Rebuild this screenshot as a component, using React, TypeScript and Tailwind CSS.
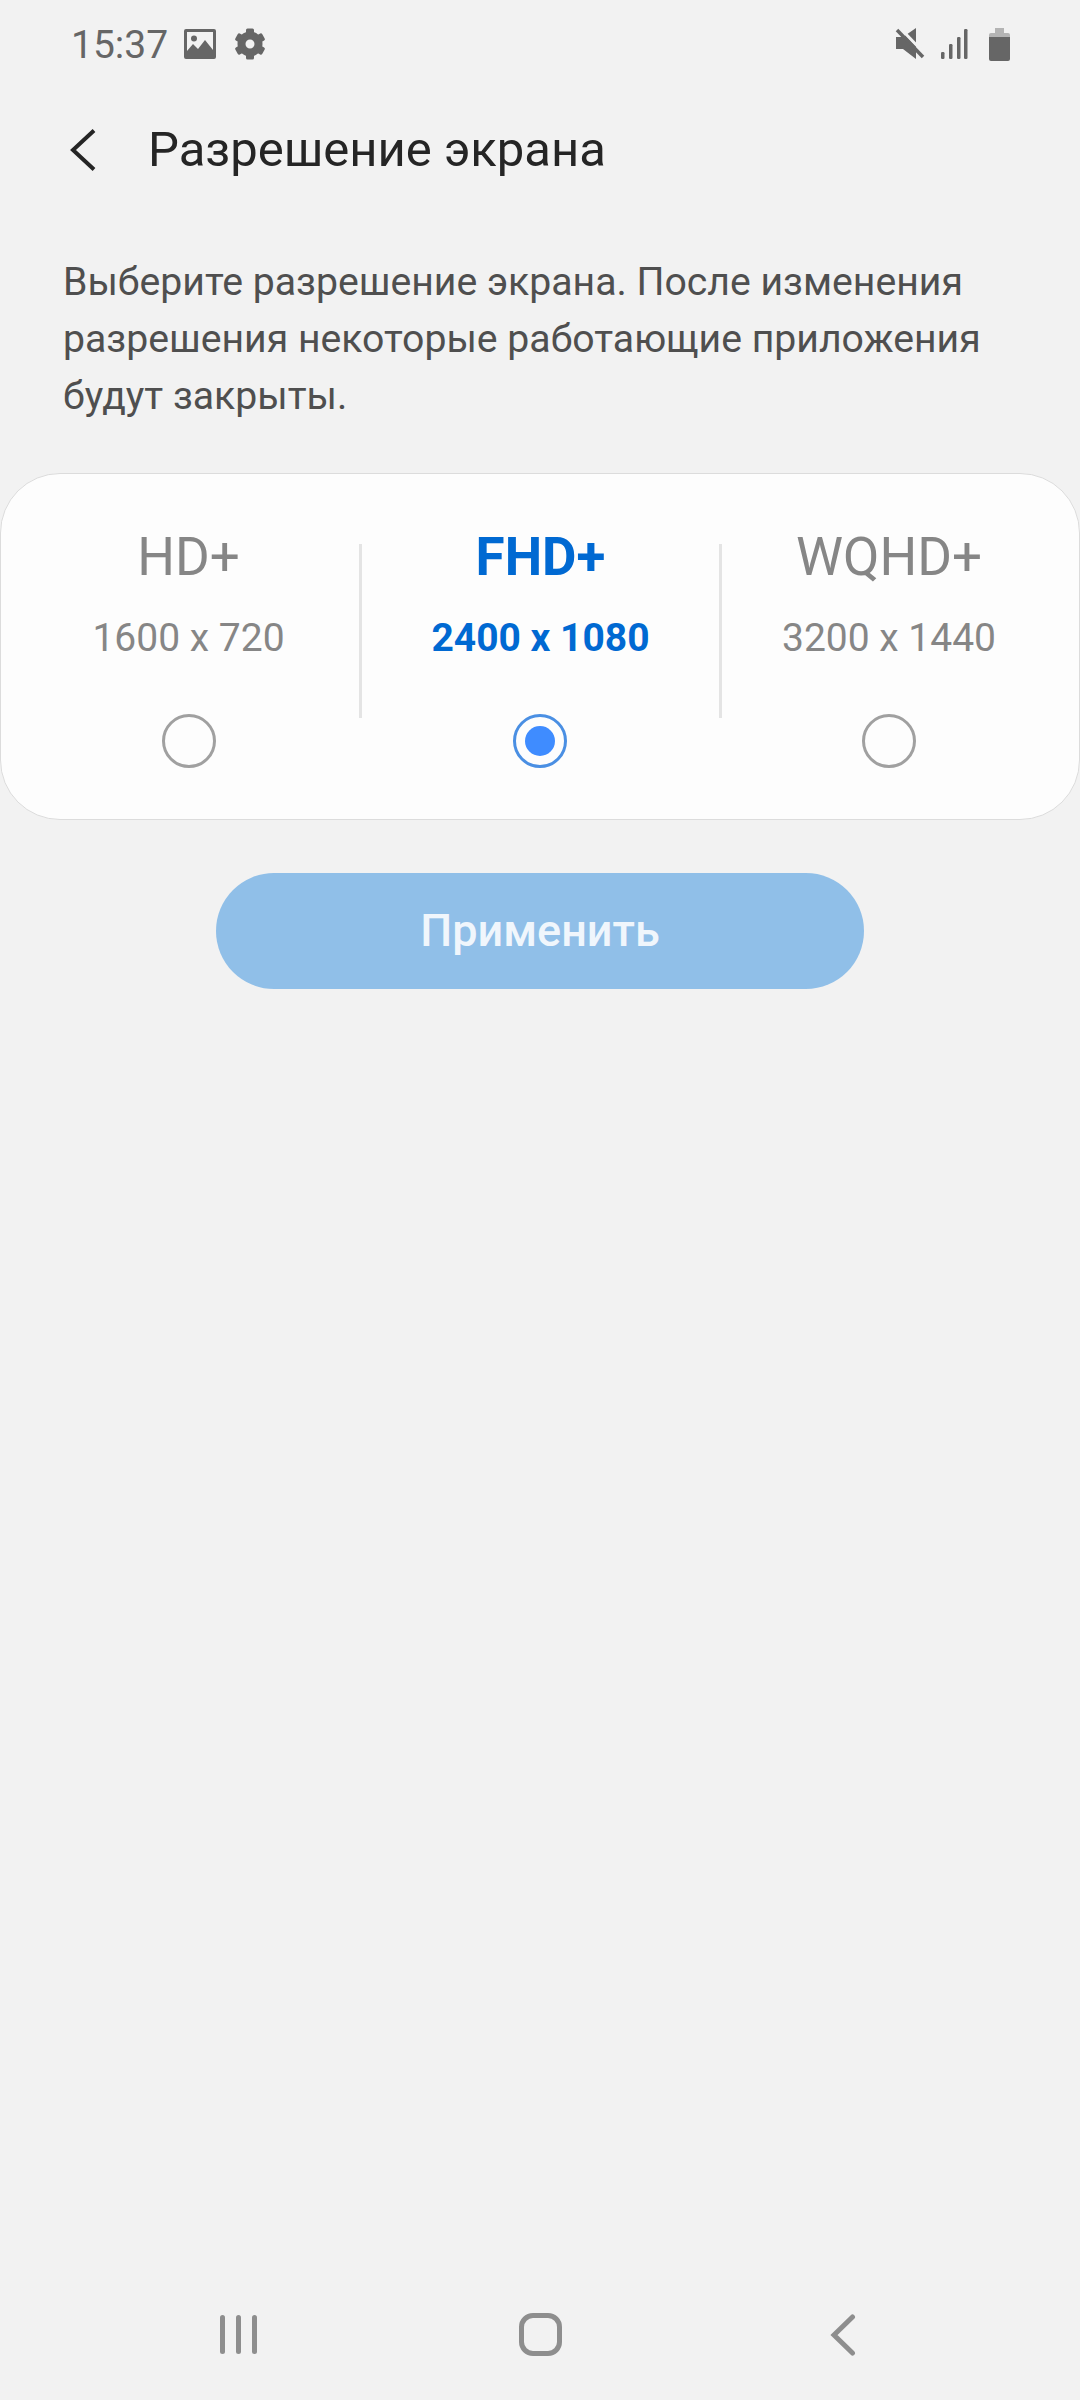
import React from 'react';

const resolutions = [
  { name: 'HD+', size: '1600 x 720', width: 'w-[341px]' },
  { name: 'FHD+', size: '2400 x 1080', width: 'w-[357px]', active: true },
  { name: 'WQHD+', size: '3200 x 1440', width: 'w-[334px]' },
];

const GEAR_TEETH = [0, 60, 120, 180, 240, 300];

const StatusBar = () => (
  <div className="flex items-center h-[34px] mt-[27px] pl-[71px] pr-[70px] text-[#666666]">
    <span className="text-[39px] leading-[34px] w-[113px] mt-[2px]">15:37</span>
    <svg width="32" height="30" viewBox="0 0 32 30" className="mr-[18px]">
      <path
        fillRule="evenodd"
        fill="#666666"
        d="M2 0h28a2 2 0 0 1 2 2v26a2 2 0 0 1-2 2H2a2 2 0 0 1-2-2V2a2 2 0 0 1 2-2zM3 3v19l6-7 5 5 7-9 8 10V3z"
      />
      <circle cx="10" cy="9.5" r="3" fill="#666666" />
    </svg>
    <svg width="32" height="32" viewBox="0 0 32 32">
      <circle cx="16" cy="16" r="8.5" fill="none" stroke="#666666" strokeWidth="8" />
      {GEAR_TEETH.map((deg) => (
        <rect key={deg} x="12" y="0.5" width="8" height="7" rx="1.5" fill="#666666" transform={`rotate(${deg} 16 16)`} />
      ))}
    </svg>
    <div className="ml-auto flex items-center">
      <svg width="30" height="32" viewBox="0 0 30 32" className="mr-[15px]">
        <path fill="#666666" d="M1 9h7L21 0v31L8 21H1z" />
        <path d="M5 0l26 27" stroke="#f2f2f2" strokeWidth="3" />
        <path d="M2 2l26 27" stroke="#666666" strokeWidth="3.5" />
      </svg>
      <svg width="28" height="32" viewBox="0 0 28 32" className="mr-[21px]">
        <rect x="1" y="24" width="3.5" height="7" rx="1.2" fill="#666666" />
        <rect x="9" y="16" width="3.5" height="15" rx="1.2" fill="#666666" />
        <rect x="17" y="9" width="3.5" height="22" rx="1.2" fill="#666666" />
        <rect x="24" y="1" width="3.5" height="30" rx="1.2" fill="#666666" />
      </svg>
      <svg width="21" height="33" viewBox="0 0 21 33">
        <path fill="#b4b4b4" d="M6 0h9v5h4a2 2 0 0 1 2 2v3H0V7a2 2 0 0 1 2-2h4z" />
        <path fill="#666666" d="M0 9h21v22a2 2 0 0 1-2 2H2a2 2 0 0 1-2-2z" />
      </svg>
    </div>
  </div>
);

const Radio = ({ active }: { active?: boolean }) => (
  <div
    className={`w-[54px] h-[54px] rounded-full border-[3px] flex items-center justify-center ${
      active ? 'border-[#4a8fe3] mr-[2px]' : 'border-[#a0a0a0]'
    }`}
  >
    {active && <div className="w-[30px] h-[30px] rounded-full bg-[#3f8cff]" />}
  </div>
);

const ResolutionCard = () => (
  <div className="mt-[48px] h-[347px] rounded-[60px] border border-[#dcdcdc] bg-[#fdfdfd] flex pl-[17px] pr-[17px]">
    {resolutions.map((r, i) => (
      <React.Fragment key={r.name}>
        {i > 0 && <div className="w-[3px] h-[174px] mt-[70px] shrink-0 bg-[#e4e4e4]" />}
        <div className={`${r.width} shrink-0 flex flex-col items-center pt-[51px]`}>
          <div
            className={`text-[53px] leading-[64px] ${
              r.active ? 'font-bold text-[#0069d2]' : 'text-[#868686]'
            }`}
          >
            {r.name}
          </div>
          <div
            className={`mt-[24px] text-[39px] leading-[50px] ${
              r.active ? 'font-bold text-[#0069d2]' : 'text-[#868686]'
            }`}
          >
            {r.size}
          </div>
          <div className="mt-[51px]">
            <Radio active={r.active} />
          </div>
        </div>
      </React.Fragment>
    ))}
  </div>
);

const NavBar = () => (
  <div className="mt-auto mb-[44px] h-[43px] flex items-center relative">
    <div className="ml-[220px] flex gap-[11px]">
      <div className="w-[5px] h-[39px] rounded-full bg-[#8e8e8e]" />
      <div className="w-[5px] h-[39px] rounded-full bg-[#8e8e8e]" />
      <div className="w-[5px] h-[39px] rounded-full bg-[#8e8e8e]" />
    </div>
    <div className="ml-[262px] w-[43px] h-[43px] rounded-[14px] border-[5px] border-[#8e8e8e]" />
    <svg width="26" height="42" viewBox="0 0 26 42" fill="none" className="ml-[268px]">
      <path d="M22.5 3L4 21l18.5 18" stroke="#8e8e8e" strokeWidth="5" strokeLinecap="round" strokeLinejoin="miter" />
    </svg>
  </div>
);

export default function App() {
  return (
    <div className="w-[1080px] h-[2400px] bg-[#f2f2f2] flex flex-col font-['Roboto',sans-serif]">
      <StatusBar />

      {/* header */}
      <div className="flex items-center h-[60px] mt-[59px] pl-[68px]">
        <svg width="30" height="44" viewBox="0 0 30 44" fill="none">
          <path d="M26 2.5L5 22l21 19.5" stroke="#252525" strokeWidth="4" />
        </svg>
        <h1 className="ml-[50px] text-[49px] leading-[60px] text-[#252525]">Разрешение экрана</h1>
      </div>

      <p className="mt-[74px] px-[63px] text-[39.2px] leading-[57px] text-[#4f4f4f]">
        Выберите разрешение экрана. После изменения
        <br />
        разрешения некоторые работающие приложения
        <br />
        будут закрыты.
      </p>

      <ResolutionCard />

      <button className="mt-[53px] mx-auto w-[648px] h-[116px] rounded-[58px] bg-[#90bfe8] text-[45px] font-medium text-[#f0f6fc]">
        Применить
      </button>

      <NavBar />
    </div>
  );
}
